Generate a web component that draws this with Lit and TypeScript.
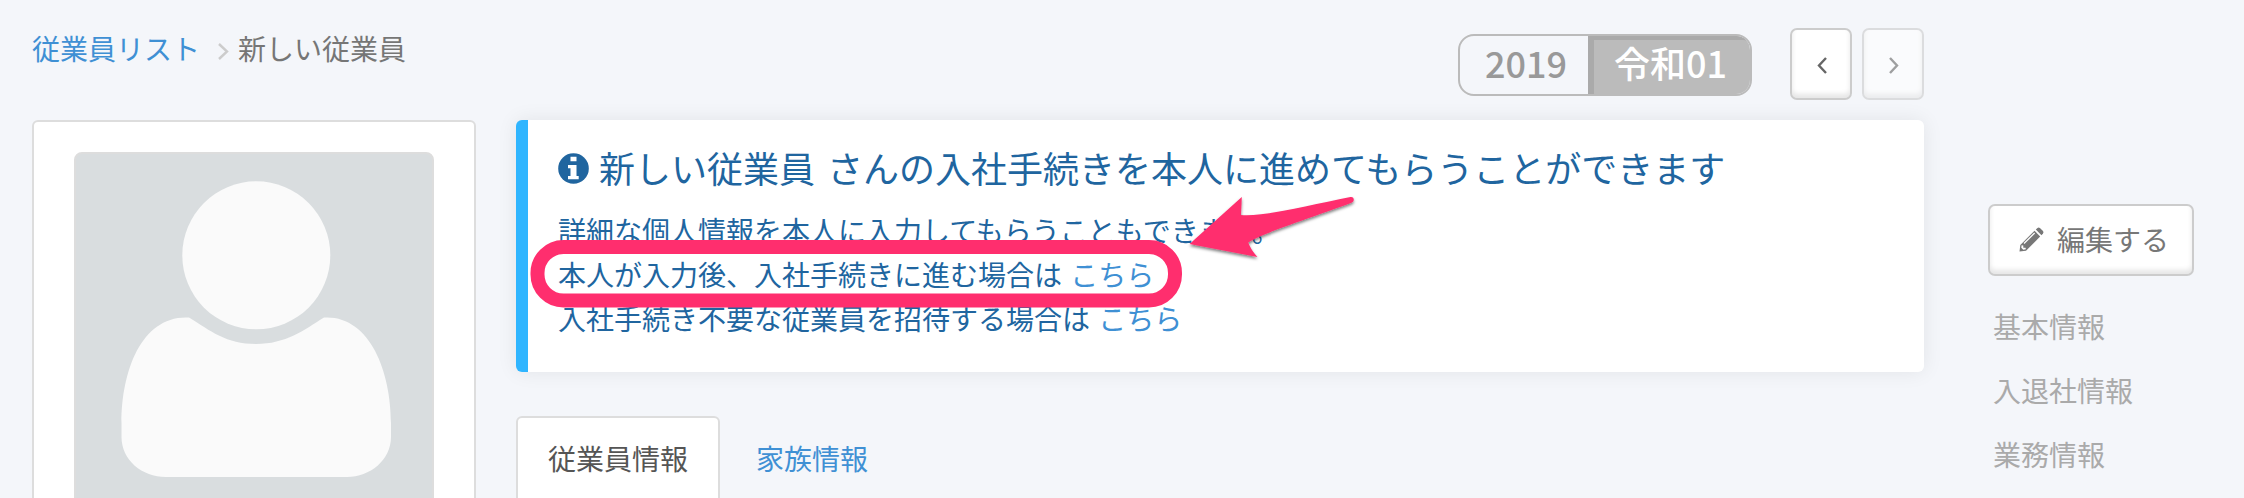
import { LitElement, html, css, svg } from "lit";
import { customElement } from "lit/decorators.js";

const chevron = (points: string, cls: string, w: number, h: number) => html`
  <svg class=${cls} width=${w} height=${h} viewBox="0 0 ${w} ${h}">
    ${svg`<polyline points=${points} fill="none" stroke="currentColor" stroke-width="2.4"></polyline>`}
  </svg>`;

@customElement("app-root")
export class AppRoot extends LitElement {
  static styles = css`
    :host {
      display: block;
      position: relative;
      box-sizing: border-box;
      width: 2244px;
      height: 498px;
      overflow: hidden;
      background: #f4f6fa;
      color: #767676;
      font-family: "Noto Sans CJK JP", sans-serif;
      font-weight: 400;
      font-size: 28px;
      line-height: 44px;
    }
    * { box-sizing: border-box; }
    svg { display: block; flex: none; }
    a { color: #3f90d4; text-decoration: none; }
    .page { display: flex; height: 498px; padding-left: 32px; }
    .content { width: 1892px; display: flex; flex-direction: column; }
    .top { display: flex; justify-content: space-between; height: 120px; flex: none; }
    .crumbs { display: flex; align-items: center; height: 44px; margin-top: 26px; }
    .crumbs .sep { color: #ccc; margin: 6px 9px 0 18px; }
    .controls { display: flex; padding-top: 28px; align-items: flex-start; }
    .era { display: flex; width: 294px; height: 62px; margin: 6px 38px 0 0; border: 2px solid #bbb; border-radius: 16px; overflow: hidden; font-size: 36px; line-height: 52px; font-weight: 500; }
    .year { width: 128px; padding-left: 25px; color: #999; }
    .year.on { width: 162px; padding-left: 26px; background: #bbb; color: #fff; box-shadow: inset 6px 4px 0 #aaa; border-radius: 0 13px 0 0; }
    .btn { display: flex; align-items: center; justify-content: center; height: 72px; border: 2px solid #ccc; border-radius: 7px; background: #fff; box-shadow: inset 0 -4px 5px rgba(0, 0, 0, 0.1); color: #666; }
    .step { width: 62px; margin-left: 10px; }
    .step:nth-child(2) { margin-left: 0; }
    .step svg { margin: 2px 0 0 2px; }
    .off { opacity: 0.6; }
    .body { display: flex; gap: 40px; flex: 1; }
    .profile { width: 444px; height: 500px; flex: none; padding: 30px 0 0 40px; border: 2px solid #ddd; border-radius: 6px; background: #fff; }
    .avatar { width: 360px; height: 400px; border: 2px solid #ddd; border-radius: 8px; background: #d9dddf; overflow: hidden; }
    .main { width: 1408px; display: flex; flex-direction: column; gap: 44px; }
    .notice { height: 252px; flex: none; padding: 22px 0 0 30px; border-left: 12px solid #2fb5ff; border-radius: 6px; background: #fff; color: #20659f; box-shadow: 0 0 20px rgba(0, 0, 0, 0.08); white-space: nowrap; word-spacing: 2px; }
    .title { display: flex; align-items: center; height: 52px; gap: 10px; font-size: 36px; line-height: 52px; margin-bottom: 14px; word-spacing: 4px; }
    .title span { margin-top: -3px; }
    .line { height: 44px; }
    .tabs { display: flex; }
    .tab { height: 100px; padding: 20px 0 0 31px; }
    .tab.on { width: 204px; border: 2px solid #ddd; border-radius: 6px; background: #fff; color: #555; padding: 18px 0 0 30px; }
    .tab.link { padding-left: 36px; }
    .side { width: 206px; margin: 204px 0 0 64px; }
    .edit { width: 206px; gap: 13px; color: #777; padding: 0 0 2px 6px; }
    .nav { display: flex; flex-direction: column; gap: 20px; padding: 28px 0 0 5px; color: #aaa; }
    .mark { position: absolute; left: 520px; top: 180px; }
  `;

  render() {
    return html`
      <div class="page">
        <div class="content">
          <div class="top">
            <div class="crumbs">
              <a>従業員リスト</a>
              ${chevron("1,1 9,8.5 1,16", "sep", 11, 17)}
              <span>新しい従業員</span>
            </div>
            <div class="controls">
              <div class="era">
                <div class="year">2019</div>
                <div class="year on">令和01</div>
              </div>
              <div class="btn step">${chevron("9,1 2,8.5 9,16", "", 10, 17)}</div>
              <div class="btn step off">${chevron("1,1 8,8.5 1,16", "", 10, 17)}</div>
            </div>
          </div>
          <div class="body">
            <div class="profile">
              <div class="avatar">
                <svg width="356" height="396" viewBox="76 154 356 396" fill="#fafafa">
                  <circle cx="256.3" cy="255.3" r="74"></circle>
                  <path d="M189 317.5C211 331 226 344 256 344C286 344 304 330 324 317.500C369 315 391 370 391 423V437C391 460 370 477 347 477H166C142 477 121.500 460 121.500 437V423C121.500 370 142 315 189 317.500Z"></path>
                </svg>
              </div>
            </div>
            <div class="main">
              <div class="notice">
                <div class="title">
                  <svg width="31" height="31" viewBox="0 0 31 31">
                    <circle cx="15.500" cy="15.500" r="15.300" fill="#20659f"></circle>
                    <path d="M12.500 3.800H18.500V8.300H12.500ZM10 12H18.500V23H20.700V26.300H10V23H12.500V15.300H10Z" fill="#fff"></path>
                  </svg>
                  <span>新しい従業員 さんの入社手続きを本人に進めてもらうことができます</span>
                </div>
                <div class="line">詳細な個人情報を本人に入力してもらうこともできます。</div>
                <div class="line">本人が入力後、入社手続きに進む場合は <a>こちら</a></div>
                <div class="line">入社手続き不要な従業員を招待する場合は <a>こちら</a></div>
              </div>
              <div class="tabs">
                <div class="tab on">従業員情報</div>
                <div class="tab link"><a>家族情報</a></div>
              </div>
            </div>
          </div>
        </div>
        <div class="side">
          <div class="btn edit">
            <svg width="25" height="25" viewBox="0 0 25 25" fill="#777">
              <path d="M15.500 3.800L21.200 9.500L7 23.700L0.500 24.500L1.300 18Z"></path>
              <path d="M16.800 2.500L18.500 0.900Q19.700 0 20.900 1L24 4.100Q25 5.300 24 6.500L22.500 8.200Z"></path>
              <path d="M5 16.500L15.600 6" stroke="#fff" stroke-width="1.300"></path>
              <path d="M2.600 18.300L4.300 18.500V20.800H6.600L6.800 22.200L4.300 22.800L2.300 20.800Z" fill="#fff"></path>
            </svg>
            <span>編集する</span>
          </div>
          <div class="nav">
            <span>基本情報</span>
            <span>入退社情報</span>
            <span>業務情報</span>
          </div>
        </div>
      </div>
      <svg class="mark" width="860" height="140" viewBox="520 180 860 140">
        <defs>
          <filter id="shade" x="-10%" y="-10%" width="120%" height="130%">
            <feDropShadow dx="0" dy="2" stdDeviation="1.500" flood-color="#000" flood-opacity="0.5"></feDropShadow>
          </filter>
        </defs>
        <rect x="537.500" y="247" width="637.500" height="53.500" rx="26" fill="none" stroke="#ff2e6e" stroke-width="14"></rect>
        <path filter="url(#shade)" fill="#ff2e6e" d="M1189.600 244L1241.800 197L1241 215C1264 217 1310 205 1350.500 197Q1353.800 196.600 1353.800 200Q1353.800 201.700 1351.500 202.700C1322 214 1262 233 1248.200 242.500Q1251 250 1257.400 257Z"></path>
      </svg>
    `;
  }
}
